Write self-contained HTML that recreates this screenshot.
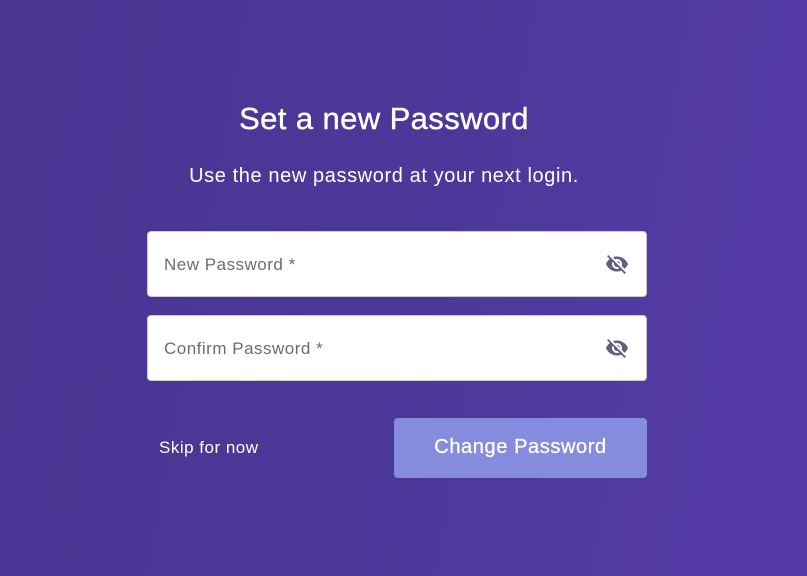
<!DOCTYPE html>
<html><head><style>
html,body{margin:0;padding:0}
body{width:807px;height:576px;overflow:hidden;background:linear-gradient(100deg,#4a3592 0%,#4c3899 50%,#553ba8 100%);font-family:"Liberation Sans",sans-serif;position:relative;color:#fff}
.t{position:absolute;left:0;width:768px;text-align:center;top:101px;font-size:31px;letter-spacing:0.4px;-webkit-text-stroke:0.4px #fff}
.s{position:absolute;left:0;width:768px;text-align:center;top:165px;font-size:20px;letter-spacing:0.6px}
.f{position:absolute;left:147px;width:498px;height:64px;background:#fff;border:1px solid #ccc;border-radius:4px}
.f span{position:absolute;left:16px;top:23px;font-size:17px;letter-spacing:0.5px;color:#6b6b78}
.f svg{position:absolute;left:457px;top:20px}
.skip{position:absolute;left:159px;top:438px;font-size:17px;letter-spacing:0.5px}
.btn{position:absolute;left:394px;top:418px;width:253px;height:60px;background:#868cdd;border-radius:4px;text-align:center;line-height:58px;font-size:20px;letter-spacing:0.6px;-webkit-text-stroke:0.3px #fff}
</style></head><body>
<div class="t">Set a new Password</div>
<div class="s">Use the new password at your next login.</div>
<div class="f" style="top:231px"><span>New Password *</span><svg width="24" height="24" viewBox="0 0 24 24"><path fill="#5f6080" d="M12 7c2.76 0 5 2.24 5 5 0 .65-.13 1.26-.36 1.83l2.92 2.92c1.51-1.26 2.7-2.890 3.43-4.75-1.73-4.39-6-7.5-11-7.5-1.4 0-2.74.25-3.98.7l2.16 2.16C10.74 7.13 11.35 7 12 7zM2 4.27l2.28 2.28.46.46C3.08 8.3 1.78 10.02 1 12c1.73 4.39 6 7.5 11 7.5 1.55 0 3.03-.3 4.38-.84l.42.42L19.73 22 21 20.73 3.27 3 2 4.27zM7.53 9.8l1.55 1.55c-.05.21-.08.43-.08.65 0 1.66 1.34 3 3 3 .22 0 .44-.03.65-.08l1.55 1.55c-.67.33-1.41.53-2.2.53-2.76 0-5-2.24-5-5 0-.79.2-1.53.53-2.2zm4.31-.78l3.15 3.15.02-.16c0-1.66-1.34-3-3-3l-.17.01z"/></svg></div>
<div class="f" style="top:315px"><span>Confirm Password *</span><svg width="24" height="24" viewBox="0 0 24 24"><path fill="#5f6080" d="M12 7c2.76 0 5 2.24 5 5 0 .65-.13 1.26-.36 1.83l2.92 2.92c1.51-1.26 2.7-2.89 3.43-4.75-1.73-4.39-6-7.5-11-7.5-1.4 0-2.74.25-3.98.7l2.16 2.16C10.74 7.13 11.35 7 12 7zM2 4.27l2.28 2.28.46.46C3.08 8.3 1.78 10.02 1 12c1.73 4.39 6 7.5 11 7.5 1.55 0 3.03-.3 4.38-.84l.42.42L19.73 22 21 20.73 3.27 3 2 4.27zM7.53 9.8l1.55 1.55c-.05.21-.08.43-.08.65 0 1.66 1.34 3 3 3 .22 0 .44-.03.65-.08l1.55 1.550c-.67.33-1.41.53-2.2.53-2.76 0-5-2.24-5-5 0-.79.2-1.53.53-2.2zm4.31-.78l3.15 3.15.02-.16c0-1.66-1.34-3-3-3l-.17.01z"/></svg></div>
<div class="skip">Skip for now</div>
<div class="btn">Change Password</div>
</body></html>
